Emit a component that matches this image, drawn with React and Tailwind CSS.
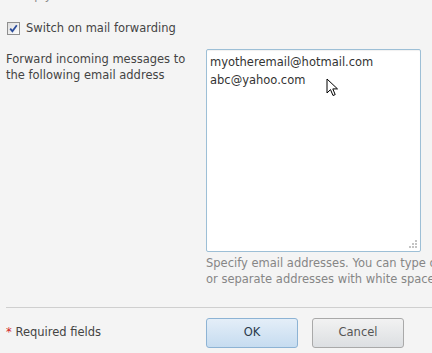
import React from 'react';

function CheckBox() {
  return (
    <svg width="13" height="13" viewBox="0 0 13 13" className="shrink-0">
      <defs>
        <linearGradient id="cbg" x1="0" y1="0" x2="1" y2="1">
          <stop offset="0" stopColor="#dcdcdc" />
          <stop offset="1" stopColor="#ffffff" />
        </linearGradient>
      </defs>
      <rect x="0.5" y="0.5" width="12" height="12" fill="url(#cbg)" stroke="#8f8f8f" />
      <path d="M3.2 6.6 L5.4 9.2 L9.8 3.2" fill="none" stroke="#2b4c9b" strokeWidth="1.8" />
    </svg>
  );
}

function Cursor() {
  return (
    <svg width="14" height="20" viewBox="0 0 14 20" className="absolute left-[326px] top-[78px]">
      <path d="M1 1 L1 15 L4.5 11.6 L7 17.5 L9.2 16.6 L6.8 10.9 L11.5 10.9 Z" fill="#fff" stroke="#000" strokeWidth="1" strokeLinejoin="round" />
    </svg>
  );
}

export default function App() {
  return (
    <div className="relative w-[432px] h-[353px] overflow-hidden bg-[#f4f4f4] font-['DejaVu_Sans',sans-serif] text-[11.5px] text-[#444]">
      {/* line above, scrolled off */}
      <div className="-mt-[12px] pl-[6px] h-[15px] leading-[15px] text-[#888]">as reply-to address</div>

      <div className="mt-[19px] pl-[7px] flex items-center gap-[6px] h-[13px]">
        <CheckBox />
        <span>Switch on mail forwarding</span>
      </div>

      <div className="mt-[14px] flex">
        <div className="w-[206px] shrink-0 pl-[6px] pt-[2px] leading-[16px] whitespace-nowrap">
          Forward incoming messages to
          <br />
          the following email address
        </div>
        <div className="flex flex-col shrink-0">
          <div className="relative w-[215px] h-[203px] bg-white border border-[#9dbfd6] rounded-[2px] shadow-[inset_0_1px_1px_rgba(0,0,0,0.06)] px-[3px] pt-[3px] leading-[18px] text-[#333]">
            <div>myotheremail@hotmail.com</div>
            <div>abc@yahoo.com</div>
            <svg width="10" height="10" viewBox="0 0 10 10" className="absolute right-[2px] bottom-[2px]">
              <g fill="#c4c4c4">
                <rect x="7" y="1" width="2" height="2" />
                <rect x="4" y="4" width="2" height="2" />
                <rect x="7" y="4" width="2" height="2" />
                <rect x="1" y="7" width="2" height="2" />
                <rect x="4" y="7" width="2" height="2" />
                <rect x="7" y="7" width="2" height="2" />
              </g>
            </svg>
          </div>
          <div className="mt-[3px] leading-[16px] text-[#868686] whitespace-nowrap">
            Specify email addresses. You can type one per line
            <br />
            or separate addresses with white space
          </div>
        </div>
      </div>

      <div className="mt-[20px] ml-[6px] border-t border-[#cfcfcf]" />

      <div className="mt-[10px] flex items-center">
        <div className="w-[206px] shrink-0 pl-[6px]">
          <span className="text-[#d21f1f]">*</span> Required fields
        </div>
        <button className="w-[92px] h-[30px] rounded-[3px] border border-[#8db3d4] bg-gradient-to-b from-[#e4eef8] to-[#c6dcf0] text-[#2a3b4c]">
          OK
        </button>
        <button className="ml-[14px] w-[92px] h-[30px] rounded-[3px] border border-[#a9a9a9] bg-gradient-to-b from-[#f2f2f2] to-[#dcdfe2] text-[#555]">
          Cancel
        </button>
      </div>

      <Cursor />
    </div>
  );
}
